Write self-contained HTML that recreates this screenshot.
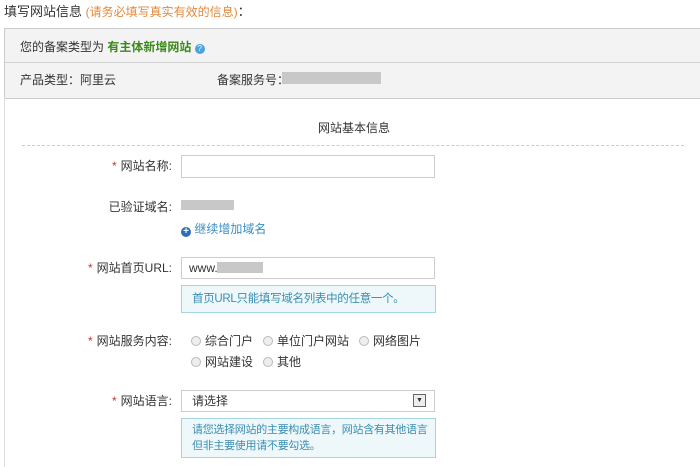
<!DOCTYPE html>
<html><head><meta charset="utf-8"><style>
body{margin:0;width:700px;height:467px;overflow:hidden;background:#fff;font-family:"Liberation Sans","Noto Sans CJK SC",sans-serif;font-size:12px;line-height:14px;color:#333;position:relative}
.a{position:absolute;white-space:nowrap}
.gray{background:#c8c8c8}
.inp{position:absolute;left:181px;width:254px;border:1px solid #ccc;background:#fff;box-sizing:border-box}
.tip{position:absolute;left:181px;width:255px;border:1px solid #a8d4e0;background:#eef8fb;color:#3b8db0;box-sizing:border-box;padding:0 10px;line-height:16px;font-size:11.5px;white-space:nowrap;letter-spacing:-0.3px}
.lab{position:absolute;right:528px;white-space:nowrap;color:#333}
.star{color:#c33;margin-right:4px}
.r{display:inline-block;width:8px;height:8px;border:1px solid #bbb;border-radius:50%;background:#eee;margin-right:4px;vertical-align:-1px}
</style></head><body>
<div class="a" style="left:4px;top:5px;font-size:13px">填写网站信息 <span style="color:#e08a3c;font-size:12px">(请务必填写真实有效的信息)</span>：</div>
<div class="a" style="left:4px;top:28px;width:696px;height:69px;background:#f3f3f3;border-top:1px solid #ccc;border-bottom:1px solid #ccc;border-left:1px solid #ccc"></div>
<div class="a" style="left:5px;top:62px;width:695px;height:1px;background:#d0d0d0"></div>
<div class="a" style="left:4px;top:97px;width:1px;height:370px;background:#ddd"></div>
<div class="a" style="left:20px;top:40px">您的备案类型为 <b style="color:#3a8a1a">有主体新增网站</b> <span style="display:inline-block;width:10px;height:10px;border-radius:50%;background:#4aa3df;color:#fff;font-size:8px;line-height:10px;text-align:center;vertical-align:0">?</span></div>
<div class="a" style="left:20px;top:73px">产品类型：阿里云</div>
<div class="a" style="left:217px;top:73px">备案服务号：</div>
<div class="a gray" style="left:282px;top:72px;width:99px;height:12px"></div>
<div class="a" style="left:318px;top:121px">网站基本信息</div>
<div class="a" style="left:22px;top:145px;width:662px;border-top:1px dashed #ccc"></div>
<div class="lab" style="top:159px"><span class="star">*</span>网站名称:</div>
<div class="inp" style="top:155px;height:23px"></div>
<div class="lab" style="top:200px">已验证域名:</div>
<div class="a gray" style="left:181px;top:200px;width:53px;height:10px"></div>
<div class="a" style="left:181px;top:222px;color:#3a8fc4"><span style="display:inline-block;width:10px;height:10px;border-radius:50%;background:#2a6fb8;color:#fff;font-size:10px;line-height:10px;text-align:center;font-weight:bold;vertical-align:-1px">+</span> 继续增加域名</div>
<div class="lab" style="top:261px;right:528px"><span class="star">*</span>网站首页URL:</div>
<div class="inp" style="top:257px;height:22px;padding:3px 7px">www.</div>
<div class="a gray" style="left:217px;top:262px;width:46px;height:11px"></div>
<div class="tip" style="top:285px;height:28px;padding-top:5px">首页URL只能填写域名列表中的任意一个。</div>
<div class="lab" style="top:334px"><span class="star">*</span>网站服务内容:</div>
<div class="a" style="left:191px;top:334px"><span class="r"></span>综合门户&nbsp;&nbsp;&nbsp;<span class="r"></span>单位门户网站&nbsp;&nbsp;&nbsp;<span class="r"></span>网络图片</div>
<div class="a" style="left:191px;top:355px"><span class="r"></span>网站建设&nbsp;&nbsp;&nbsp;<span class="r"></span>其他</div>
<div class="lab" style="top:394px"><span class="star">*</span>网站语言:</div>
<div class="inp" style="top:390px;height:22px;padding:3px 10px">请选择</div>
<div class="a" style="left:413px;top:394px;width:11px;height:11px;border:1px solid #666;background:#eee;font-size:7px;line-height:11px;text-align:center">▼</div>
<div class="tip" style="top:418px;height:40px;padding-top:3px;font-size:11px">请您选择网站的主要构成语言，网站含有其他语言<br>但非主要使用请不要勾选。</div>
</body></html>
